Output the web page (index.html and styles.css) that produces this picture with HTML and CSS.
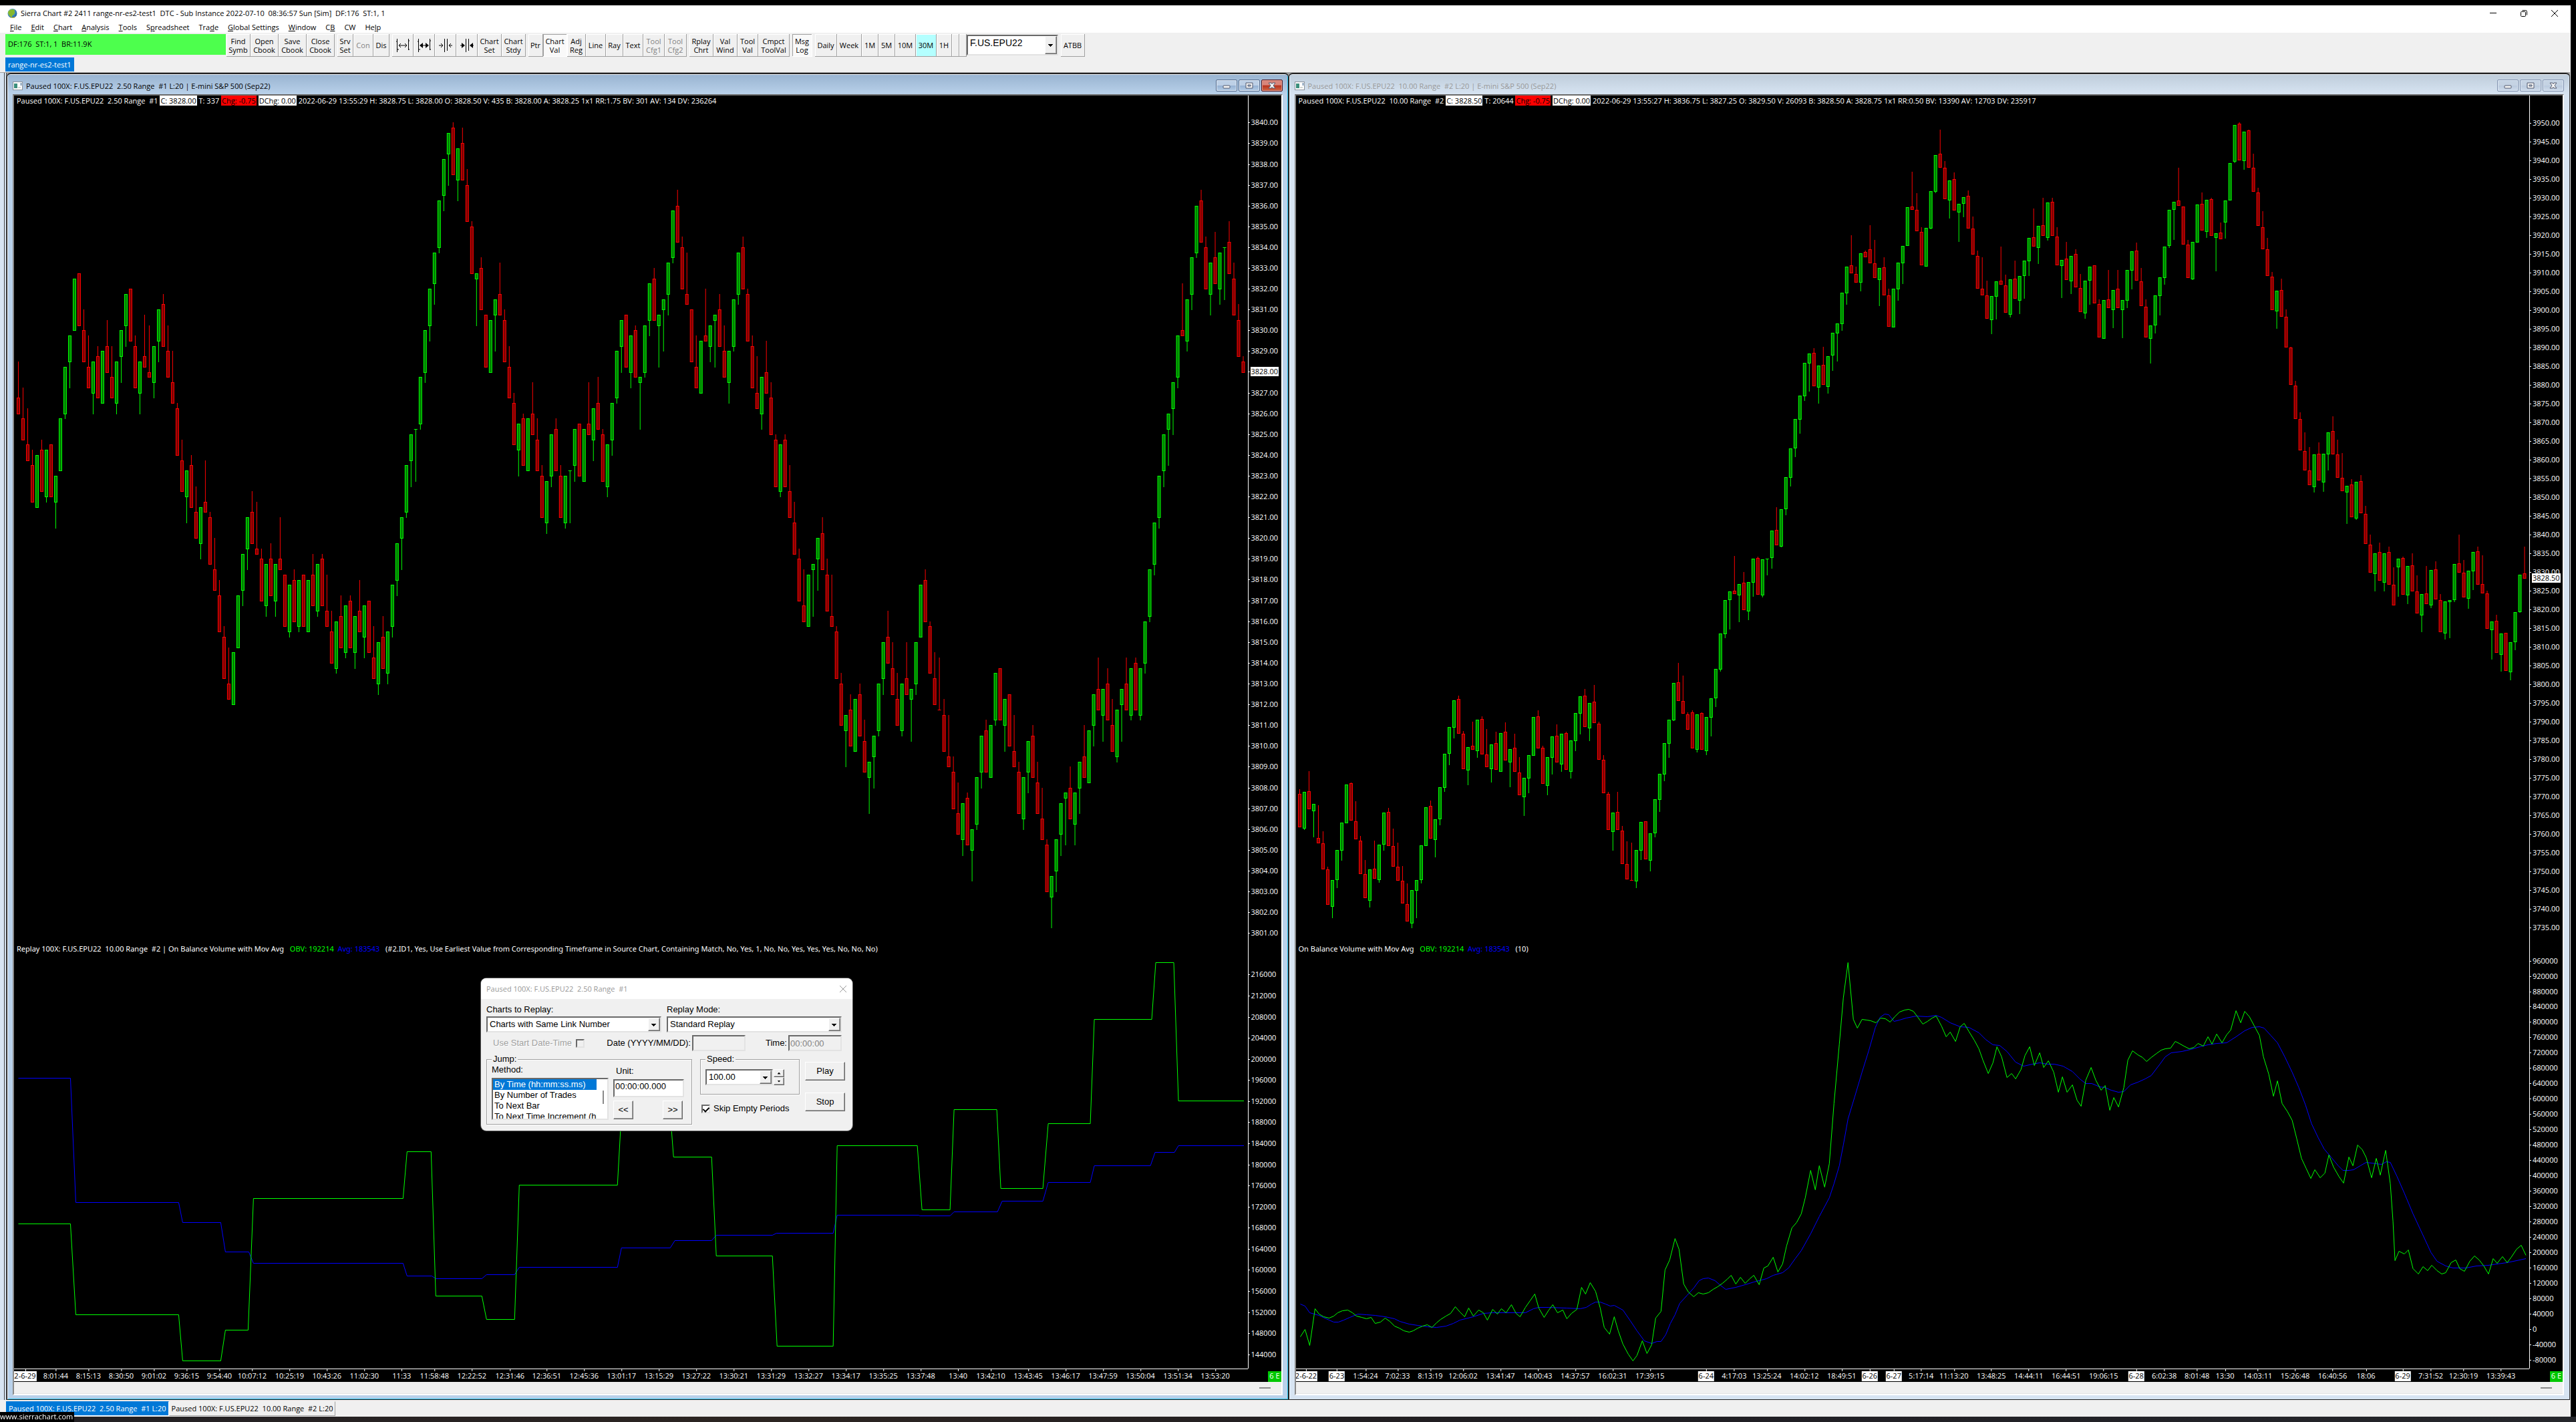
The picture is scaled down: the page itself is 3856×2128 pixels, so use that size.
FILE: index.html
```html
<!DOCTYPE html>
<html lang="en">
<head>
<meta charset="utf-8">
<title>Sierra Chart #2 2411 range-nr-es2-test1</title>
<link rel="stylesheet" href="styles.css">
</head>
<body>
<div class="app">
  <header class="title-bar">
    <svg class="app-icon" viewBox="0 0 15 15"><defs><radialGradient id="globe" cx=".35" cy=".35" r=".8"><stop offset="0" stop-color="#bfe8f5"/><stop offset=".5" stop-color="#3f8fc4"/><stop offset="1" stop-color="#1d4f80"/></radialGradient></defs><circle cx="7.500" cy="7" r="7" fill="url(#globe)"/><path d="M1 5C3 1 8 0 11 2c-1 2 1 3 0 5-2 3-4 2-4 6-3-1-6-4-6-8z" fill="#86b82c"/><path d="M4 11c2 3 6 3 8 0l-1 3H6z" fill="#d8c23a"/></svg>
    <h1>Sierra Chart #2 2411 range-nr-es2-test1&nbsp; DTC - Sub Instance 2022-07-10&nbsp; 08:36:57 Sun [Sim]&nbsp; DF:176&nbsp; ST:1, 1</h1>
    <div class="app-controls">
      <button aria-label="Minimize"><svg viewBox="0 0 12 12"><path d="M1 5.500h10"/></svg></button>
      <button aria-label="Restore"><svg viewBox="0 0 12 12"><rect x="1.500" y="3.500" width="7" height="7" rx="1"/><path d="M3.500 1.500h5q2 0 2 2v5"/></svg></button>
      <button aria-label="Close"><svg viewBox="0 0 12 12"><path d="M1 1l10 10M11 1L1 11"/></svg></button>
    </div>
  </header>
  <nav class="menu-bar">
    <button><u>F</u>ile</button><button><u>E</u>dit</button><button><u>C</u>hart</button><button><u>A</u>nalysis</button><button><u>T</u>ools</button><button>S<u>p</u>readsheet</button><button>Tra<u>d</u>e</button><button><u>G</u>lobal Settings</button><button><u>W</u>indow</button><button>C<u>B</u></button><button>CW</button><button>He<u>l</u>p</button>
  </nav>
  <div class="toolbar">
    <output class="feed-status">DF:176&nbsp; ST:1, 1&nbsp; BR:11.9K</output>
    <div class="group group-book"><button>Find<br>Symb</button><button>Open<br>Cbook</button><button>Save<br>Cbook</button><button>Close<br>Cbook</button></div>
    <div class="group group-server"><button>Srv<br>Set</button><button disabled>Con</button><button>Dis</button></div>
    <div class="group group-bars">
      <button aria-label="Increase bar spacing"><svg viewBox="0 0 20 20"><path d="M1.500 0v20M18.500 0v17M4 10h12M7 7l-3 3 3 3M13 7l3 3-3 3M0 4h2M18 3h2M18 16h2M1 16h3"/></svg></button>
      <button aria-label="Increase bar width"><svg viewBox="0 0 20 20"><path d="M1.500 0v20M18.500 0v17M4 10h12M0 4h2M18 3h2M18 16h2M1 16h3"/><path class="solid" d="M3 10l5-4v8zM17 10l-5-4v8z"/></svg></button>
      <button aria-label="Decrease bar spacing"><svg viewBox="0 0 20 20"><path d="M8.500 0v20M12.500 0v18M0 10h6M3 7l3 3-3 3M20 10h-5M18 7l-3 3 3 3"/></svg></button>
      <button aria-label="Decrease bar width"><svg viewBox="0 0 20 20"><path d="M8.500 0v20M12.500 0v18M0 10h4M20 10h-4"/><path class="solid" d="M7 10L2 6v8zM14 10l5-4v8z"/></svg></button>
      <button>Chart<br>Set</button><button>Chart<br>Stdy</button>
    </div>
    <div class="group group-draw"><button>Ptr</button><button class="pressed">Chart<br>Val</button><button>Adj<br>Reg</button><button>Line</button><button>Ray</button><button>Text</button><button disabled>Tool<br>Cfg1</button><button disabled>Tool<br>Cfg2</button></div>
    <div class="group group-tool"><button>Rplay<br>Chrt</button><button>Val<br>Wind</button><button>Tool<br>Val</button><button>Cmpct<br>ToolVal</button></div>
    <div class="group group-log"><button class="pressed">Msg<br>Log</button></div>
    <div class="group group-period"><button>Daily</button><button>Week</button><button>1M</button><button>5M</button><button>10M</button><button class="current">30M</button><button>1H</button><button aria-label="Unassigned 1"></button><button aria-label="Unassigned 2"></button></div>
    <span class="combo symbol"><select aria-label="Symbol"><option>F.US.EPU22</option></select></span>
    <div class="group group-last"><button>ATBB</button></div>
  </div>
  <div class="book-tabs"><button>range-nr-es2-test1</button></div>

  <main class="workspace">
    <div class="edge"></div>
    <section class="child active">
      <header class="child-title">
        <svg class="doc-icon" viewBox="0 0 15 13"><rect x=".5" y=".5" width="14" height="12" fill="#fff" stroke="#8b939c"/><rect x="2" y="3" width="5" height="7" fill="#3c8f7c"/><path d="M12.500 2v4" stroke="#1d4f80"/><path d="M8 9h4" stroke="#cfd5cf" stroke-width="2"/></svg>
        <h2>Paused 100X: F.US.EPU22&nbsp; 2.50 Range&nbsp; #1 L:20 | E-mini S&amp;P 500 (Sep22)</h2>
        <div class="child-controls">
          <button aria-label="Minimize"><svg viewBox="0 0 16 12"><rect x="3" y="6" width="10" height="4" rx="1"/></svg></button>
          <button aria-label="Maximize"><svg viewBox="0 0 16 12"><path fill-rule="evenodd" d="M3 2h10v8H3zM6 5v2h4V5z"/></svg></button>
          <button class="close" aria-label="Close"><svg viewBox="0 0 16 12"><path d="M3 2h4l1 1.500L9 2h4l-3 4 3 4H9L8 8.500 7 10H3l3-4z"/></svg></button>
        </div>
      </header>
      <div class="client">
        <div class="chart">
          <div class="plot">
            <svg id="plot-a" class="canvas" viewBox="21 143 1847 1905" preserveAspectRatio="none"></svg>
            <p class="header">Paused 100X: F.US.EPU22&nbsp; 2.50 Range&nbsp; #1 <mark>C: 3828.00</mark> T: 337 <mark class="down">Chg: -0.75</mark> <mark>DChg: 0.00</mark> 2022-06-29 13:55:29 H: 3828.75 L: 3828.00 O: 3828.50 V: 435 B: 3828.00 A: 3828.25 1x1 RR:1.75 BV: 301 AV: 134 DV: 236264</p>
            <p class="header study">Replay 100X: F.US.EPU22&nbsp; 10.00 Range&nbsp; #2 | On Balance Volume with Mov Avg&nbsp; <span class="obv">OBV: 192214</span>&nbsp; <span class="avg">Avg: 183543</span>&nbsp;&nbsp; (#2.ID1, Yes, Use Earliest Value from Corresponding Timeframe in Source Chart, Containing Match, No, Yes, 1, No, No, Yes, Yes, Yes, No, No, No)</p>
          </div>
          <div id="scale-a" class="scale"></div>
          <div id="times-a" class="times"></div>
          <div class="corner"><span>6 E</span></div>
        </div>
        <div class="scroll"><span></span></div>
      </div>
    </section>
    <section class="child">
      <header class="child-title">
        <svg class="doc-icon" viewBox="0 0 15 13"><rect x=".5" y=".5" width="14" height="12" fill="#fff" stroke="#8b939c"/><rect x="2" y="3" width="5" height="7" fill="#3c8f7c"/><path d="M12.500 2v4" stroke="#1d4f80"/><path d="M8 9h4" stroke="#cfd5cf" stroke-width="2"/></svg>
        <h2>Paused 100X: F.US.EPU22&nbsp; 10.00 Range&nbsp; #2 L:20 | E-mini S&amp;P 500 (Sep22)</h2>
        <div class="child-controls">
          <button aria-label="Minimize"><svg viewBox="0 0 16 12"><rect x="3" y="6" width="10" height="4" rx="1"/></svg></button>
          <button aria-label="Maximize"><svg viewBox="0 0 16 12"><path fill-rule="evenodd" d="M3 2h10v8H3zM6 5v2h4V5z"/></svg></button>
          <button aria-label="Close"><svg viewBox="0 0 16 12"><path d="M3 2h4l1 1.500L9 2h4l-3 4 3 4H9L8 8.500 7 10H3l3-4z"/></svg></button>
        </div>
      </header>
      <div class="client">
        <div class="chart">
          <div class="plot">
            <svg id="plot-b" class="canvas" viewBox="1940 143 1847 1905" preserveAspectRatio="none"></svg>
            <p class="header">Paused 100X: F.US.EPU22&nbsp; 10.00 Range&nbsp; #2 <mark>C: 3828.50</mark> T: 20644 <mark class="down">Chg: -0.75</mark> <mark>DChg: 0.00</mark> 2022-06-29 13:55:27 H: 3836.75 L: 3827.25 O: 3829.50 V: 26093 B: 3828.50 A: 3828.75 1x1 RR:0.50 BV: 13390 AV: 12703 DV: 235917</p>
            <p class="header study">On Balance Volume with Mov Avg&nbsp; <span class="obv">OBV: 192214</span>&nbsp; <span class="avg">Avg: 183543</span>&nbsp;&nbsp; (10)</p>
          </div>
          <div id="scale-b" class="scale"></div>
          <div id="times-b" class="times"></div>
          <div class="corner"><span>6 E</span></div>
        </div>
        <div class="scroll"><span></span></div>
      </div>
    </section>
  </main>

  <nav class="chart-tabs">
    <button class="selected">Paused 100X: F.US.EPU22&nbsp; 2.50 Range&nbsp; #1 L:20</button>
    <button>Paused 100X: F.US.EPU22&nbsp; 10.00 Range&nbsp; #2 L:20</button>
  </nav>
</div>
<footer class="taskbar"></footer>
<a class="link-status" href="#">www.sierrachart.com</a>

<form class="dialog" role="dialog" aria-labelledby="dlg-title">
  <header class="dialog-title">
    <h2 id="dlg-title">Paused 100X: F.US.EPU22&nbsp; 2.50 Range&nbsp; #1</h2>
    <button type="button" aria-label="Close"><svg viewBox="0 0 12 12"><path d="M1 1l10 10M11 1L1 11"/></svg></button>
  </header>
  <div class="dialog-body">
    <div class="modes">
      <div><label for="charts">Charts to Replay:</label><span class="combo"><select id="charts"><option>Charts with Same Link Number</option></select></span></div>
      <div><label for="mode">Replay Mode:</label><span class="combo"><select id="mode"><option>Standard Replay</option></select></span></div>
    </div>
    <div class="start">
      <label class="off" for="use-start">Use Start Date-Time</label><input type="checkbox" id="use-start" disabled>
      <label class="date-label" for="date">Date (YYYY/MM/DD):</label><input type="text" id="date" disabled>
      <label class="time-label" for="time">Time:</label><input type="text" id="time" value="00:00:00" disabled>
    </div>
    <div class="controls">
      <fieldset class="jump">
        <legend>Jump:</legend>
        <div class="method">
          <label for="method">Method:</label>
          <div class="list"><select id="method" size="4"><option selected>By Time (hh:mm:ss.ms)</option><option>By Number of Trades</option><option>To Next Bar</option><option>To Next Time Increment (hh:mm:ss)</option></select><span class="thumb"></span></div>
        </div>
        <div class="unit">
          <label for="unit">Unit:</label>
          <input type="text" id="unit" value="00:00:00.000">
          <div class="step"><button type="button">&lt;&lt;</button><button type="button">&gt;&gt;</button></div>
        </div>
      </fieldset>
      <div class="rate">
        <fieldset class="speed">
          <legend>Speed:</legend>
          <span class="combo"><select aria-label="Speed"><option>100.00</option></select></span>
          <span class="spin"><button type="button" aria-label="Faster"></button><button type="button" aria-label="Slower" class="less"></button></span>
        </fieldset>
        <div class="skip"><input type="checkbox" id="skip" checked><label for="skip">Skip Empty Periods</label></div>
      </div>
      <div class="run"><button type="button">Play</button><button type="button">Stop</button></div>
    </div>
  </div>
</form>
<script src="charts.js"></script>
</body>
</html>
```
FILE: styles.css
```css
* { box-sizing: border-box; }
body {
  margin: 0;
  min-height: 100vh;
  display: flex;
  flex-direction: column;
  background: #000;
  color: #000;
  font: 11px/14px "Open Sans", "Noto Sans", sans-serif;
}
h1, h2, p { margin: 0; font: inherit; }
button, select, input { margin: 0; padding: 0; font: inherit; color: inherit; border-radius: 0; }
button { border: 0; background: none; }

.app {
  flex: 1;
  display: flex;
  flex-direction: column;
  margin: 8px 8px 0 0;
  background: #f0f0f0;
}

/* Application title and menu */
.title-bar { display: flex; align-items: center; height: 24px; padding-left: 11px; background: #fff; }
.app-icon { width: 15px; height: 15px; margin-right: 5px; }
.app-controls { display: flex; margin-left: auto; padding-right: 1px; }
.app-controls button { width: 46px; height: 22px; padding: 0 17px; }
.app-controls svg { display: block; width: 12px; height: 12px; fill: none; stroke: #000; }
.menu-bar { display: flex; height: 17px; padding-left: 8px; background: #fff; }
.menu-bar button { padding: 0 7px; line-height: 16px; }
.menu-bar u { text-underline-offset: 1px; }

/* Toolbar */
.toolbar { display: flex; height: 36px; padding: 2px 0 0 8px; }
.feed-status { width: 330px; height: 31px; margin-right: 1px; padding: 8px 4px; background: #4dff4d; }
.group { display: grid; margin-right: 4px; height: 34px; }
.group button {
  border: 1px solid #a0a0a0;
  border-width: 0 1px 1px 0;
  box-shadow: inset 1px 1px #fff;
  line-height: 13px;
  white-space: nowrap;
  display: flex;
  align-items: center;
  justify-content: center;
  text-align: center;
}
.group button:disabled { color: #838383; }
.group svg { width: 20px; height: 20px; fill: none; stroke: #000; }
.group .solid { fill: #000; stroke: none; }
.group .pressed { background: #f9f9f9; border-color: #fff; box-shadow: inset 1px 1px #a0a0a0; }
.group .current { background: #b4ffff; }
.group-book { grid-template-columns: 36px 42px 42px 42px; }
.group-server { grid-template-columns: 24px 30px 24px; }
.group-bars { grid-template-columns: 32px 32px 32px 32px 36px 36px; }
.group-draw { grid-template-columns: 22px 36px 28px 30px 26px 30px 32px 33px; }
.group-tool { grid-template-columns: 36px 36px 31px 47px; }
.group-log { grid-template-columns: 30px; }
.group-period { grid-template-columns: 33px 37px 25px 25px 31px 31px 23px 11px 11px; margin-right: 0; }
.group-last { grid-template-columns: 36px; }

.book-tabs { height: 23px; padding: 1px 8px; }
.book-tabs button { height: 21px; padding: 0 4px; background: #0078d7; color: #fff; }

/* Drop-downs */
.combo { position: relative; display: block; }
.combo select, .dialog input[type="text"] {
  appearance: none;
  display: block;
  width: 100%;
  height: 100%;
  padding: 0 3px;
  background: #fff;
  border: 2px solid;
  border-color: #696969 #e3e3e3 #e3e3e3 #696969;
  outline: 1px solid transparent;
}
.combo::after {
  content: "";
  position: absolute;
  inset: 2px 2px 2px auto;
  width: 16px;
  border: 1px solid;
  border-color: #fff #696969 #696969 #fff;
  box-shadow: inset -1px -1px #a0a0a0;
  background: linear-gradient(#000, #000) 4px 8px / 7px 1px no-repeat, linear-gradient(#000, #000) 5px 9px / 5px 1px no-repeat, linear-gradient(#000, #000) 6px 10px / 3px 1px no-repeat, linear-gradient(#000, #000) 7px 11px / 1px 1px no-repeat, #f0f0f0;
  pointer-events: none;
}
.symbol { width: 137px; height: 31px; margin: 1px 4px 0 0; font: 14px/16px "Liberation Sans", Arial, sans-serif; }
.symbol select { padding-bottom: 8px; }
.symbol::after { background-position: 4px 11px, 5px 12px, 6px 13px, 7px 14px, 0 0; }

/* Chart windows */
.workspace {
  flex: 1;
  display: grid;
  grid-template-columns: 10px 1fr 1fr;
  margin-right: 1px;
  border-top: 1px solid #a0a0a0;
  background: #9b9b9b;
}
.edge { background: #d7e4f2; border-right: 4px double #444; }
.child {
  display: flex;
  flex-direction: column;
  min-width: 0;
  padding: 1px 8px 6px;
  border: 1px solid #222;
  border-top-width: 2px;
  border-radius: 6px 6px 0 0;
  background: #d7e4f2;
  box-shadow: inset 1px 1px #f4f8fc;
}
.child.active { background: #b9d1ea; box-shadow: inset 1px 1px #f4f8fc, inset -1px -1px #2fc6ee; }
.child-title { display: flex; align-items: center; height: 29px; margin: 0 -7px; padding: 4px 7px 0; background: linear-gradient(#bfcddb, #d7e4f2); color: #999; }
.active .child-title { background: linear-gradient(#99b4d1, #b9d1ea); color: #000; }
.doc-icon { width: 15px; height: 13px; margin-right: 5px; }
.child-controls { display: flex; gap: 2px; margin-left: auto; padding-bottom: 2px; }
.child-controls button { width: 32px; height: 18px; border: 1px solid #8494b0; border-radius: 2px; box-shadow: inset 0 0 0 1px #dbe6f3; background: linear-gradient(#c5d3e3 50%, #b9c9dd 50%, #cfdcec); }
.active .child-controls button { border-color: #566c8e; background: linear-gradient(#bdd0e6 50%, #95b1d2 50%, #b4cce6); }
.active .child-controls .close { border-color: #4d1420; box-shadow: inset 0 0 0 1px #e09a8c; background: linear-gradient(#d8857a 45%, #b8311c 50%, #cf6848); }
.child-controls svg { display: block; width: 16px; height: 12px; margin: 0 auto; fill: #f4f4f4; stroke: #51596e; }
.client {
  flex: 1;
  display: flex;
  flex-direction: column;
  border: 2px solid;
  border-color: #6b6b6b #fff #fff #8a8a8a;
  background: #f0f0f0;
}
.chart { flex: 1; display: grid; grid-template: 1fr 20px / 1fr 50px; background: #000; color: #fff; overflow: hidden; }
.plot { position: relative; min-width: 0; }
.canvas { position: absolute; inset: 0; width: 100%; height: 100%; shape-rendering: crispEdges; }
.canvas polyline { fill: none; stroke-width: 1px; vector-effect: non-scaling-stroke; }
.up { fill: #008000; stroke: #0f0; }
.dn { fill: #800000; stroke: #f00; }
.line-obv { stroke: #0f0; }
.line-avg { stroke: #00f; }
.header { position: absolute; top: 1px; left: 4px; white-space: nowrap; }
.header.study { top: calc(67% - 6px); font-family: "Noto Sans", "Open Sans", sans-serif; }
.header mark { padding: 0 1px; background: #fff; color: #000; }
.header .down { background: #f00; }
.obv { margin-left: 3px; color: #0f0; }
.avg { color: #00f; }
.header span.obv, .header span.avg { color: #0f0; }
.header span.avg { color: #00f; }
.scale { position: relative; border-left: 1px solid #fff; }
.scale span { position: absolute; left: 0; height: 14px; margin-top: -7px; padding-left: 4px; white-space: nowrap; }
.scale span::before { content: ""; position: absolute; left: 0; top: 7px; width: 2px; height: 1px; background: #fff; }
.scale .last { left: 3px; padding: 0 1px; background: #fff; color: #000; }
.times { position: relative; border-top: 1px solid #fff; }
.times span { position: absolute; top: 3px; height: 15px; padding: 0 1px; transform: translateX(-50%); }
.times span::before { content: ""; position: absolute; left: 50%; top: -3px; width: 1px; height: 3px; background: #fff; }
.times .day { background: #fff; color: #000; }
.corner { display: flex; justify-content: flex-end; align-items: flex-end; }
.corner span { height: 16px; padding: 0 2px; background: #00c800; }
.scroll { display: flex; justify-content: flex-end; align-items: center; height: 18px; padding-right: 16px; border-bottom: 1px solid #e3e3e3; }
.scroll span { width: 17px; height: 2px; background: #8a8a8a; }

.chart-tabs { display: flex; height: 25px; padding: 2px 0 1px 9px; }
.chart-tabs button { padding: 0 3px; border: 1px solid; border-color: #f0f0f0 #a0a0a0 #a0a0a0 #f0f0f0; }
.chart-tabs .selected { background: #0078d7; color: #fff; border-color: #0078d7 #fff #fff #0078d7; }
.taskbar { height: 8px; background: linear-gradient(90deg, #222024, #2c2522 30%, #1f1d22 60%, #25262b); }
.link-status { position: fixed; left: 0; bottom: 0; height: 15px; padding-right: 2px; background: #000; color: #fff; text-decoration: none; }

/* Replay dialog */
.dialog {
  position: absolute;
  left: 720px;
  top: 1464px;
  width: 556px;
  border-radius: 8px;
  overflow: hidden;
  background: #f0f0f0;
  box-shadow: 0 0 0 1px #555;
  font: 13px/16px "Liberation Sans", Arial, sans-serif;
}
.dialog-title { display: flex; align-items: center; justify-content: space-between; height: 31px; padding: 0 8px; background: #fff; color: #999; font: 11px/14px "Open Sans", "Noto Sans", sans-serif; }
.dialog-title svg { display: block; width: 12px; height: 12px; fill: none; stroke: #999; }
.dialog-body { padding: 8px 8px 9px; }
.modes { display: grid; grid-template-columns: 262px 262px; gap: 8px; }
.modes .combo { height: 24px; margin-top: 2px; }
.start { display: flex; align-items: center; height: 30px; padding: 2px 8px 0 10px; }
.dialog input[type="text"]:disabled { background: #f0f0f0; color: #838383; }
.dialog .start input[type="text"] { width: 80px; height: 24px; padding: 0 1px; }
.off { color: #a0a0a0; text-shadow: 1px 1px #fff; }
.dialog input[type="checkbox"] { appearance: none; width: 13px; height: 13px; border: 2px solid; border-color: #696969 #e3e3e3 #e3e3e3 #696969; }
.start input[type="checkbox"] { margin-left: 6px; }
.date-label { margin-left: auto; }
.time-label { margin-left: 30px; }
.start label + input[type="text"] { margin-left: 2px; }
.controls { display: grid; grid-template-columns: 308px 149px 60px; column-gap: 12px; padding-top: 2px; }
.dialog fieldset { min-width: 0; margin: 0; border: 1px solid #a0a0a0; box-shadow: 1px 1px #fff, inset 1px 1px #fff; }
.dialog legend { height: 16px; padding: 0 2px; background: #f0f0f0; }
.jump { display: flex; gap: 7px; height: 106px; padding: 0 10px 6px 7px; }
.method label, .unit label { display: block; height: 16px; }
.list { display: flex; width: 175px; height: 63px; margin-top: 4px; overflow: hidden; background: #fff; border: 2px solid; border-color: #696969 #e3e3e3 #e3e3e3 #696969; }
.list select { width: 155px; height: 72px; border: 0; outline: 0; background: #fff; overflow: hidden; scrollbar-width: none; }
.list option { height: 16px; min-height: 16px; padding: 0 2px; line-height: 16px; overflow: hidden; }
.list option:checked { background: #0078d7 linear-gradient(#0078d7, #0078d7); color: #fff; }
.thumb { width: 2px; height: 20px; margin: 17px 0 0 9px; background: #8a8a8a; }
.unit { padding-top: 2px; width: 106px; }
.unit label { padding-left: 4px; }
.dialog .unit input { height: 27px; margin-top: 4px; padding: 0 1px 6px; }
.step { display: flex; justify-content: space-between; margin-top: 5px; padding-right: 2px; }
.step button { width: 30px; height: 28px; }
.step button, .run button, .spin button { border: 1px solid; border-color: #fff #696969 #696969 #fff; box-shadow: inset -1px -1px #a0a0a0; background: #f0f0f0; }
.speed { display: flex; height: 61px; padding: 7px 7px 0; }
.speed .combo { width: 101px; height: 24px; }
.spin { display: grid; width: 16px; height: 24px; margin-left: 1px; }
.spin button::before { content: ""; display: block; width: 5px; height: 3px; margin: 0 auto; background: #000; clip-path: polygon(50% 0, 100% 100%, 0 100%); }
.spin .less::before { clip-path: polygon(0 0, 100% 0, 50% 100%); }
.skip { display: flex; align-items: center; gap: 5px; margin-top: 13px; padding-left: 2px; }
.dialog #skip { position: relative; background: #fff; }
#skip:checked::after { content: ""; position: absolute; left: 2px; top: 0; width: 4px; height: 7px; border: solid #000; border-width: 0 2px 2px 0; transform: rotate(45deg); }
.run { display: flex; flex-direction: column; gap: 18px; padding-top: 12px; margin-left: -4px; }
.run button { width: 60px; height: 28px; }
```
FILE: charts.js
```js
const NS = 'http://www.w3.org/2000/svg';

// Each bar is <direction><high>,<open>[,<low>]; an up bar closes on its high, a down bar on its low.
const RANGE_2_50 = `r46,53 r51,57 r55,62 r63,66 g64,74 r61,63 g63,72 r62,62 g68,73 g57,67 g47,56 g41,46 g30,40 r29,29 r36,40 r41,47 g46,52 r43,45 g44,54 r38,43 r43,49 g46,54 g40,45 g33,39 r32,32 r41,43 g46,52 r37,45 r39,48 g43,50 g36,42 r33,35 r39,44 r44,50 r54,55 r61,65 g67,72 r64,66 r70,75 g74,81 r65,73 r75,76 r80,86 r88,91 r97,99 r101,108 g102,112 g91,101 g83,90 g76,82 r71,75 r73,82 r82,84 g85,93 r81,84 g85,92 r76,84 r87,87 g89,98 r86,88 g88,97 r87,87 g88,98 r83,87 g85,94 r83,84 r87,94 r94,98 g96,105 r91,95 g93,102 r91,92 g95,102 r88,94 g93,99 r92,92 r97,103 g100,108 r95,99 g98,106 g89,97 g81,88 g76,80 g66,75 g60,65 g59,59 g49,58 g40,48 g32,39 g25,31 g15,24 g7,14 g2,6 r0,1 g5,11 r1,4 r9,12 r19,20 g29,30 r26,28 r37,37 g38,48 g34,37 r27,33 r36,38 r43,47 r52,54 g58,63 r56,57 g57,67 r50,56 r57,61 r66,68 g69,77 g60,68 r57,59 r66,68 g68,77 g67,67 g59,66 r58,58 g59,69 r50,58 g55,61 r49,54 r59,60 g62,70 g54,61 g44,53 g38,43 r37,37 g41,48 r39,40 g49,50 g39,48 g31,38 r28,30 g37,39 g34,36 g27,33 g17,26 r13,16 r22,24 r25,33 r36,36 r41,47 g42,52 r32,41 g39,43,46 g37,38 r33,36 r39,44 g44,50 g34,43 g25,33 r22,24 r32,33 r41,43 r45,52 g49,56 r42,48 r50,53 r60,61 g62,71 r60,61 r66,71 r73,77 r82,84 r86,93 g87,97 g85,86 g80,84 r76,79 r84,87 r87,95 r97,98 r106,108 g114,117 r110,113 g111,121 r108,110 r115,119 g123,126 g118,122 g108,117 g100,107 r94,99 r100,105 r106,111 g108,117 r100,107 g109,111 g100,108 g89,99 r86,88 r96,97 r102,107 r103,113 r111,114 r114,122 r122,125 r127,133 g131,138 r129,130 g136,140 g126,135 g118,125 r115,117 g116,126 g106,115 r105,105 g111,116 r110,110 r114,121 r123,125 g126,134 g119,125 r116,118 r123,127 r128,134 r138,139 g145,149 g138,144 g131,137 g129,130 r124,128 g129,135 g123,128 r116,122 g117,127 g110,116 r103,109 g109,114 r105,108 r111,116 g113,122 g109,112 r103,108 g105,114 r103,104 g105,114 g96,104 g86,95 g77,85 g68,76 g60,67 g56,59 g50,55 g41,49 r31,40 g34,42 g26,33 g16,25 r13,15 r22,24 g27,33 r21,26 g25,32 g24,24 r19,23 r27,30 r35,38 r45,46,48`;

const RANGE_10_FIRST = `r1261,1269 g1266,1332 r1227,1264 g1288,1300,1348 r1290,1351 r1338,1361 r1404,1409 g1428,1477 g1373,1427 g1322,1373 g1252,1322 r1248,1249 r1283,1320 r1347,1355 r1391,1417 g1409,1465 r1356,1407 g1363,1427 g1304,1362 r1295,1303 r1333,1366 r1359,1404 r1402,1430 r1435,1473 g1447,1508 g1428,1447 g1364,1427 g1294,1364 r1282,1291 g1316,1353 g1257,1315 g1195,1257 g1146,1194 g1096,1146 r1088,1094 r1153,1158 g1183,1225 r1136,1180,1187 g1132,1189 r1126,1131 r1149,1196 g1178,1222 r1154,1175 g1157,1227 r1137,1154 g1187,1210 r1158,1184 r1201,1230 g1240,1274 g1198,1240 g1127,1197 r1115,1126 r1180,1184 g1201,1253 g1163,1201 r1141,1162 g1158,1214 r1154,1157 g1170,1227 g1120,1170 g1089,1120 r1075,1088 g1101,1147 r1068,1099 r1136,1140 r1198,1206 r1266,1269 g1304,1338 r1266,1303 r1328,1337 r1357,1399 r1359,1429 g1373,1430 g1321,1373 r1320,1320 g1342,1391 g1279,1341 g1232,1279 g1175,1232 g1132,1175 g1064,1132 r1027,1063 r1051,1098 r1119,1122,1149 r1115,1119 g1122,1186 r1118,1120 g1127,1189 g1093,1127 g1038,1091 g973,1038 g911,973 g895,910 r830,894 g882,901 r859,879 g878,931 g835,878 r831,833 g836,901 g834,836,864 g783,832 r740,782 g743,811 g684,742 g631,684 g577,630 g533,577 g473,533 g456,473 r446,454 g478,517 r443,477 g460,516 g417,458 g400,417 g343,400 g295,343 r237,293 r295,309,323 g270,324 r265,268,276 r219,263 r246,289 g298,318 r278,296 r336,348 g336,406 g288,336 g257,288 g185,256 r120,184 r159,190 r222,231 g224,294 g156,224 g89,156 r42,86 r100,112`;

const RANGE_10_SECOND = `g170,206 r156,168 g213,227 g201,211,236 r188,198 r236,258 r298,307 r310,367 r352,379 g380,423 g354,380 r291,352 r342,361 g350,413 r316,349 g344,388 g316,343 g275,316 r221,273 g253,292 r202,252 g210,273 r202,209 r255,272 g315,325 r282,312 g307,353 r295,304 r340,366 g353,411 g327,351 r325,325 r387,395 g388,457 r333,387 g370,405 r333,367 g388,405 g333,388 g299,333 r283,298 r329,354 r387,400 g434,457 g379,433 g346,379 g290,346 g224,288 g209,223 r147,207 r218,218 r278,287 g282,349 g214,282 r192,213 g206,262 r202,204 g266,273 r247,265,276 g207,245 g138,206 g69,135 r64,67 g82,134 r78,79 r122,147 r184,192 r226,255 r275,295 r337,345 g371,407 r349,370 r405,418 r473,474 r535,543 r592,604 r628,662 r655,698 g669,727 r647,667 g667,718 g629,667 r599,626 r642,669 r666,711 g726,737 r714,723 g718,784 r706,717 r762,777 r814,833 g849,885 r829,846 g849,901 r836,846 r874,906 g858,873 r854,857 g872,924 r849,870 r889,918 g923,960 r872,921 g879,942 r863,877 r923,934 g936,993 g934,936 g868,932 r814,867 r860,884 g880,930 g846,880 r836,845 r852,904 r916,921 g972,987 r960,971 g994,1032 r993,993 g1010,1063 g955,1009 g887,954 r836,885,893`;

const OBV_A = '22,929 85,929 91,1222 216,1222 221,1371 267,1371 272,1270 300,1270 306,847 487,847 492,695 521,695 527,1160 583,1160 588,1237 622,1237 628,804 747,804 752,570 811,570 815,714 861,714 866,1031 934,1031 940,1323 1008,1323 1013,677 1110,677 1115,884 1149,884 1154,559 1206,559 1211,815 1262,815 1268,606 1319,606 1324,270 1393,270 1398,87 1420,87 1426,531 1505,531';
const AVG_A = '22,458 85,458 91,860 216,860 221,925 267,925 272,1018 301,1018 306,1056 487,1056 492,1097 522,1097 527,1104 583,1104 588,1092 622,1092 628,1069 747,1069 752,1005 811,1005 816,982 861,982 866,964 934,964 939,959 1008,959 1013,901 1111,901 1113,903 1149,903 1154,890 1207,890 1212,856 1262,856 1268,794 1319,794 1324,740 1392,740 1397,697 1421,697 1426,677 1505,677';
const OBV_B = '8,1293 14,1269 20,1321 26,1202 31,1220 37,1228 43,1233 49,1225 54,1214 60,1208 66,1207 72,1214 77,1225 83,1229 89,1235 95,1230 100,1249 106,1245 112,1232 118,1243 123,1257 129,1265 135,1272 141,1278 146,1273 152,1264 158,1258 163,1254 169,1263 175,1248 180,1236 186,1226 192,1216 198,1196 203,1212 209,1228 214,1200 220,1225 226,1207 232,1215 237,1238 243,1205 249,1219 254,1202 260,1214 266,1190 272,1217 277,1227 283,1198 289,1177 295,1155 300,1200 306,1229 312,1207 317,1190 323,1214 329,1206 334,1234 340,1218 346,1204 352,1132 357,1154 363,1118 369,1147 375,1200 380,1262 386,1283 392,1227 397,1272 403,1316 409,1348 415,1371 420,1352 426,1305 432,1347 438,1318 443,1232 449,1210 454,1077 460,1044 466,975 471,1010 477,1122 483,1148 489,1164 495,1150 501,1155 507,1150 513,1139 519,1130 524,1120 530,1108 535,1095 541,1123 546,1100 552,1120 558,1106 563,1094 569,1124 575,1070 580,1064 586,1036 592,1083 598,1058 603,1000 609,942 615,925 621,895 626,845 632,757 638,818 643,741 649,810 655,735 661,540 667,350 672,200 678,87 684,270 689,298 695,269 701,272 706,274 712,279 718,265 724,268 729,277 735,260 741,245 747,239 752,236 758,243 763,260 769,284 775,275 781,265 786,258 792,290 798,326 803,310 809,341 815,292 820,282 826,308 832,335 838,365 843,400 849,444 855,410 860,358 866,390 872,456 878,444 883,461 889,430 894,385 900,358 906,418 912,376 917,424 923,402 929,440 935,504 940,455 946,504 952,481 958,530 963,549 969,465 975,425 981,465 987,497 992,483 998,563 1003,521 1009,551 1015,490 1020,400 1026,371 1032,383 1038,391 1043,404 1049,392 1055,380 1061,368 1066,364 1072,361 1078,341 1083,347 1089,356 1095,365 1101,360 1106,346 1112,356 1118,325 1123,348 1129,317 1135,344 1141,318 1146,303 1152,241 1158,281 1163,244 1169,260 1175,293 1181,320 1186,390 1192,445 1198,516 1203,467 1209,540 1215,567 1221,595 1227,655 1232,718 1238,750 1244,781 1249,754 1255,780 1261,764 1266,707 1272,745 1278,775 1284,798 1290,712 1295,742 1301,675 1307,690 1312,715 1318,780 1324,718 1329,772 1335,692 1341,800 1344,920 1347,1046 1352,1017 1358,1026 1363,1013 1369,1073 1375,1089 1381,1066 1387,1080 1392,1062 1398,1079 1404,1091 1409,1085 1415,1053 1421,1044 1426,1073 1432,1082 1438,1050 1444,1031 1450,1045 1455,1065 1461,1089 1467,1040 1472,1055 1478,1033 1484,1053 1489,1037 1495,1010 1501,998 1507,1030';
const AVG_B = '8,1187 14,1193 20,1214 31,1224 43,1238 49,1245 55,1246 61,1238 69,1230 78,1219 89,1221 100,1223 112,1228 123,1234 130,1243 141,1251 152,1256 163,1260 175,1262 186,1259 195,1250 203,1238 220,1227 232,1217 243,1215 260,1215 283,1214 293,1203 300,1198 312,1198 334,1200 350,1203 358,1198 364,1186 369,1180 375,1180 381,1187 387,1193 392,1192 403,1207 412,1240 420,1272 429,1305 438,1314 444,1308 449,1308 455,1285 461,1250 466,1222 472,1185 481,1158 489,1136 496,1112 501,1105 507,1102 515,1112 522,1126 528,1140 541,1134 552,1124 563,1115 578,1105 586,1095 598,1086 605,1070 613,1040 621,1015 632,960 643,905 655,845 661,800 667,740 672,675 678,590 686,520 695,440 703,370 711,295 717,262 723,251 728,255 734,275 741,272 749,264 761,258 775,260 786,257 792,263 803,279 815,292 826,296 838,312 846,333 855,352 863,354 872,372 883,408 893,419 903,413 912,409 922,414 930,414 941,419 952,437 961,461 969,475 976,475 986,487 992,490 1000,497 1009,504 1015,501 1023,480 1032,472 1041,461 1049,450 1059,414 1066,390 1073,378 1086,373 1097,366 1108,358 1118,352 1129,347 1141,345 1152,325 1163,305 1172,295 1181,292 1187,298 1195,320 1203,345 1212,390 1221,440 1229,490 1237,545 1245,605 1253,650 1260,688 1269,715 1277,740 1283,756 1290,757 1296,753 1304,740 1312,731 1324,734 1330,737 1336,728 1341,730 1349,775 1358,830 1369,895 1380,960 1391,1020 1398,1050 1409,1065 1418,1071 1433,1071 1446,1063 1461,1061 1472,1058 1484,1054 1495,1047 1507,1041';

const TIMES_A = '*2-6-29@37 8:01:44@83 8:15:13@132 8:30:50@181 9:01:02@230 9:36:15@279 9:54:40@328 10:07:12@377 10:25:19@433 10:43:26@489 11:02:30@545 11:33@601 11:58:48@650 12:22:52@706 12:31:46@763 12:36:51@818 12:45:36@874 13:01:17@930 13:15:29@986 13:27:22@1042 13:30:21@1098 13:31:29@1154 13:32:27@1210 13:34:17@1266 13:35:25@1322 13:37:48@1378 13:40@1434 13:42:10@1483 13:43:45@1539 13:46:17@1595 13:47:59@1651 13:50:04@1707 13:51:34@1763 13:53:20@1819';
const TIMES_B = '*2-6-22@1955 *6-23@2001 1:54:24@2044 7:02:33@2092 8:13:19@2141 12:06:02@2190 13:41:47@2246 14:00:43@2302 14:37:57@2358 16:02:31@2414 17:39:15@2470 *6-24@2554 4:17:03@2596 13:25:24@2645 14:02:12@2701 18:49:51@2757 *6-26@2799 *6-27@2835 5:17:14@2876 11:13:20@2925 13:48:25@2981 14:44:11@3037 16:44:51@3093 19:06:15@3149 *6-28@3198 6:02:38@3240 8:01:48@3289 13:30@3331 14:03:11@3380 15:26:48@3436 16:40:56@3492 18:06@3542 *6-29@3597 7:31:52@3639 12:30:19@3688 13:39:43@3744';

const TOP = 143, HEIGHT = 1905, WIDTH = 1847;

function add(parent, name, attrs) {
  const el = document.createElementNS(NS, name);
  for (const k in attrs) el.setAttribute(k, attrs[k]);
  parent.append(el);
}

function bars(svg, data, x0, top, unit, range) {
  const y = v => Math.round(top + v * unit);
  data.split(' ').forEach((bar, i) => {
    const up = bar[0] === 'g';
    const [high, open, low = high + range] = bar.slice(1).split(',').map(Number);
    const x = x0 + i * 7 + 0.5;
    const from = y(up ? high : open), to = y(up ? open : low);
    const cls = up ? 'up' : 'dn';
    add(svg, 'path', { class: cls, d: `M${x} ${y(high)}V${y(low) + 1}` });
    if (to - from < 2) add(svg, 'path', { class: cls, d: `M${x - 2.5} ${from + 0.5}h5` });
    else add(svg, 'rect', { class: cls, x: x - 2, y: from + 0.5, width: 4, height: to - from });
  });
}

function line(svg, cls, points, x0, sx) {
  const mapped = points.split(' ').map(p => {
    const [x, y] = p.split(',').map(Number);
    return `${Math.round(x0 + x / sx) + 0.5},${Math.round(1400 + y / 2.154) + 0.5}`;
  });
  add(svg, 'polyline', { class: cls, points: mapped.join(' ') });
}

function label(box, text, y, cls) {
  const el = document.createElement('span');
  el.textContent = text;
  if (cls) el.className = cls;
  el.style.top = ((y - TOP) / HEIGHT * 100).toFixed(3) + '%';
  box.append(el);
}

function times(box, data, left) {
  data.split(' ').forEach(item => {
    const [text, x] = item.split('@');
    const el = document.createElement('span');
    el.textContent = text.replace('*', '');
    if (text[0] === '*') el.className = 'day';
    el.style.left = ((x - left + 0.5) / WIDTH * 100).toFixed(3) + '%';
    box.append(el);
  });
}

const $ = id => document.getElementById(id);

bars($('plot-a'), RANGE_2_50, 27, 183.3, 7.775, 10);
line($('plot-a'), 'line-avg', AVG_A, 0, 0.8082);
line($('plot-a'), 'line-obv', OBV_A, 0, 0.8082);
for (let k = 0; k < 40; k++) label($('scale-a'), (3840 - k).toFixed(2), 183.3 + k * 31.1);
for (let k = 0; k < 19; k++) label($('scale-a'), 216000 - k * 4000, 1458.5 + k * 31.57);
label($('scale-a'), '3828.00', 556.5, 'last');
times($('times-a'), TIMES_A, 21);

bars($('plot-b'), RANGE_10_FIRST, 1945, 160, 1 / 1.2346, 69);
bars($('plot-b'), RANGE_10_SECOND, 2918, 130, 1 / 1.2155, 68);
line($('plot-b'), 'line-avg', AVG_B, 1936, 0.8167);
line($('plot-b'), 'line-obv', OBV_B, 1936, 0.8167);
for (let k = 0; k < 44; k++) label($('scale-b'), (3950 - k * 5).toFixed(2), 183.5 + k * 28.01);
for (let k = 0; k < 27; k++) label($('scale-b'), 960000 - k * 40000, 1437.6 + k * 22.96);
label($('scale-b'), '3828.50', 864.7, 'last');
times($('times-b'), TIMES_B, 1940);
```
